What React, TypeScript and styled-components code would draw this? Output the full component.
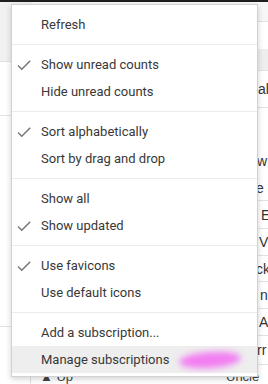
import styled, { createGlobalStyle } from 'styled-components'

const GlobalStyle = createGlobalStyle`
  html, body {
    margin: 0;
    padding: 0;
    background: #fff;
  }
  body {
    font-family: Roboto, "Liberation Sans", Arial, sans-serif;
  }
`

type Row = { h: number; text?: string; indent?: number; bg?: string; line?: boolean }

const sideRows: Row[] = [
  { h: 60, bg: '#f1f1f1', line: true },
  { h: 54, line: true },
  { h: 211, line: true },
  { h: 57 },
]

const mainRows: Row[] = [
  { h: 20, bg: '#f7f7f7', line: true },
  { h: 27 },
  { h: 22, bg: '#eeeeee', line: true },
  { h: 37, text: 'al', indent: 227, line: true },
  { h: 39 },
  { h: 28, text: 'w', indent: 226 },
  { h: 26, text: 'e', indent: 225, line: true },
  { h: 28, text: 'E', indent: 230, line: true },
  { h: 27, text: 'V', indent: 228, line: true },
  { h: 26, text: 'ck', indent: 225, line: true },
  { h: 27, text: 'n', indent: 229, line: true },
  { h: 27, text: 'A', indent: 228, line: true },
  { h: 29, text: 'rr', indent: 226, line: true },
]

type Item = { label: string; checked?: boolean; active?: boolean; blob?: boolean }

const groups: Item[][] = [
  [{ label: 'Refresh' }],
  [{ label: 'Show unread counts', checked: true }, { label: 'Hide unread counts' }],
  [{ label: 'Sort alphabetically', checked: true }, { label: 'Sort by drag and drop' }],
  [{ label: 'Show all' }, { label: 'Show updated', checked: true }],
  [{ label: 'Use favicons', checked: true }, { label: 'Use default icons' }],
  [{ label: 'Add a subscription...' }, { label: 'Manage subscriptions', active: true, blob: true }],
]

const CheckIcon = () => (
  <svg width="18" height="18" viewBox="0 0 24 24">
    <path fill="#777" d="M9 16.17L4.83 12l-1.42 1.41L9 19 21 7l-1.41-1.41z" />
  </svg>
)

export default function App() {
  return (
    <>
      <GlobalStyle />
      <Page>
        <TopBar />
        <Body>
          <Sidebar>
            {sideRows.map((r, i) => (
              <BgRow key={i} $h={r.h} $bg={r.bg} $line={r.line} />
            ))}
          </Sidebar>
          <Main>
            {mainRows.map((r, i) => (
              <BgRow key={i} $h={r.h} $bg={r.bg} $line={r.line}>
                {r.text && <CellText $indent={r.indent ?? 0}>{r.text}</CellText>}
              </BgRow>
            ))}
            <FootRow>
              <UpText>▲ Up</UpText>
              <FootRight>Uncle</FootRight>
            </FootRow>
          </Main>
        </Body>

        <Menu>
          {groups.map((g, gi) => (
            <Group key={gi} $first={gi === 0} $last={gi === groups.length - 1}>
              {g.map((it) => (
                <MenuItem key={it.label} $active={it.active}>
                  <IconSlot>{it.checked && <CheckIcon />}</IconSlot>
                  <Label>{it.label}</Label>
                  {it.blob && <Blob />}
                </MenuItem>
              ))}
            </Group>
          ))}
        </Menu>
      </Page>
    </>
  )
}

const Page = styled.div`
  position: relative;
  width: 268px;
  height: 384px;
  overflow: hidden;
  background: #fff;
`

const TopBar = styled.div`
  height: 2px;
  background: #1f1f1f;
`

const Body = styled.div`
  display: grid;
  grid-template-columns: 31px 1fr;
`

const Sidebar = styled.div`
  display: flex;
  flex-direction: column;
  border-right: 1px solid #e3e3e3;
`

const Main = styled.div`
  display: flex;
  flex-direction: column;
`

const BgRow = styled.div<{ $h: number; $bg?: string; $line?: boolean }>`
  height: ${(p) => p.$h}px;
  box-sizing: border-box;
  background: ${(p) => p.$bg ?? '#fff'};
  border-bottom: ${(p) => (p.$line ? '1px solid #e2e2e2' : 'none')};
  display: flex;
  align-items: center;
  overflow: hidden;
  white-space: nowrap;
`

const CellText = styled.span<{ $indent: number }>`
  padding-left: ${(p) => p.$indent}px;
  font-family: "Liberation Sans", Arial, sans-serif;
  font-size: 14px;
  color: #333;
`

const FootRow = styled.div`
  height: 20px;
  display: flex;
  align-items: flex-start;
  padding-top: 4px;
  font-family: "Liberation Sans", Arial, sans-serif;
  font-size: 13px;
  color: #444;
  white-space: nowrap;
`

const UpText = styled.span`
  padding-left: 9px;
  width: 186px;
`

const FootRight = styled.span``

const Menu = styled.div`
  position: absolute;
  left: 11px;
  top: 4px;
  width: 247px;
  box-sizing: border-box;
  background: #fff;
  border: 1px solid rgba(0, 0, 0, 0.18);
  box-shadow: 0 2px 6px rgba(0, 0, 0, 0.18);
`

const Group = styled.div<{ $first?: boolean; $last?: boolean }>`
  padding: 6px 0 ${(p) => (p.$last ? 3 : 6)}px;
  border-top: ${(p) => (p.$first ? 'none' : '1px solid #ebebeb')};
`

const MenuItem = styled.div<{ $active?: boolean }>`
  height: 27px;
  display: flex;
  align-items: center;
  padding-left: 3px;
  background: ${(p) => (p.$active ? '#eeeeee' : 'transparent')};
  font-family: Roboto, "Liberation Sans", Arial, sans-serif;
  font-size: 13px;
  color: #383838;
  white-space: nowrap;
`

const IconSlot = styled.span`
  width: 18px;
  height: 18px;
  margin-right: 8px;
  display: flex;
  align-items: center;
  justify-content: center;
`

const Label = styled.span``

const Blob = styled.span`
  display: inline-block;
  width: 62px;
  height: 16px;
  margin-left: 10px;
  border-radius: 50%;
  background: #f27ef2;
  filter: blur(3px);
  transform: rotate(-4deg);
`
